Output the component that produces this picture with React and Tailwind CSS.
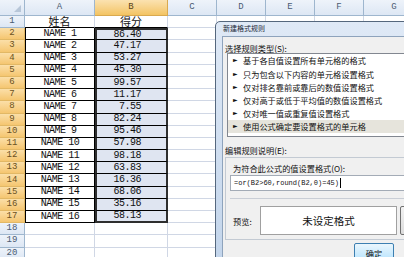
import React from 'react';

const data = [
    ['NAME 1', '86.40'],
    ['NAME 2', '47.17'],
    ['NAME 3', '53.27'],
    ['NAME 4', '45.30'],
    ['NAME 5', '99.57'],
    ['NAME 6', '11.17'],
    ['NAME 7', '7.55'],
    ['NAME 8', '82.24'],
    ['NAME 9', '95.46'],
    ['NAME 10', '57.98'],
    ['NAME 11', '98.18'],
    ['NAME 12', '63.83'],
    ['NAME 13', '16.36'],
    ['NAME 14', '68.06'],
    ['NAME 15', '35.16'],
    ['NAME 16', '58.13'],
];

const ruleTypes = [
    '基于各自值设置所有单元格的格式',
    '只为包含以下内容的单元格设置格式',
    '仅对排名靠前或靠后的数值设置格式',
    '仅对高于或低于平均值的数值设置格式',
    '仅对唯一值或重复值设置格式',
    '使用公式确定要设置格式的单元格',
];

const extraCols = ['C', 'D', 'E', 'F', 'G'];
const rowNums = Array.from({ length: 20 }, (_, i) => i + 1);

const mono = "font-['Liberation_Mono','Noto_Sans_CJK_SC',monospace]";
const cjk = "font-['Noto_Sans_CJK_SC',sans-serif]";

const SheetRow = ({ r }) => {
    const inData = r >= 2 && r <= 17;
    const item = inData ? data[r - 2] : null;

    return (
        <>
            <div
                className={
                    inData
                        ? `flex items-center justify-center border-r border-b border-[#e2b865] bg-linear-to-b from-[#fbdfa8] to-[#f5c670] text-[9px] leading-none text-[#6b5222] ${mono}`
                        : `flex items-center justify-center border-r border-b border-[#9eb6ce] bg-linear-to-b from-[#eef3fa] to-[#dde7f4] text-[9px] leading-none text-[#4a5b72] ${mono}`
                }
            >
                {r}
            </div>

            {r === 1 ? (
                <div className={`flex items-center justify-center border-r border-b border-r-[#d0d7e5] border-b-black text-[11px] leading-none text-[#111] ${cjk}`}>
                    姓名
                </div>
            ) : inData ? (
                <div className={`flex items-center justify-center border-l border-r border-b border-black text-[10px] tracking-[-0.5px] leading-none text-[#111] ${mono}`}>
                    {item[0]}
                </div>
            ) : (
                <div className="border-r border-b border-[#d0d7e5]" />
            )}

            {r === 1 ? (
                <div className={`flex items-center justify-center border-r border-b border-r-[#d0d7e5] border-b-black text-[11px] leading-none text-[#111] ${cjk}`}>
                    得分
                </div>
            ) : inData ? (
                <div
                    className={`flex items-center justify-end border-l-2 border-r-2 border-[#2e2e2e] bg-[#dfe5f1] pr-[25px] text-[10px] tracking-[-0.5px] leading-none text-[#111] ${mono} ${r === 2 ? 'border-t-2' : ''} ${r === 17 ? 'border-b-2' : 'border-b border-b-black'}`}
                >
                    {item[1]}
                </div>
            ) : (
                <div className="border-r border-b border-[#d0d7e5]" />
            )}

            {extraCols.map(c => (
                <div key={c} className="border-r border-b border-[#d0d7e5]" />
            ))}
        </>
    );
};

const RuleDialog = () => (
    <div className="absolute left-[215px] top-[21px] flex h-[240px] w-[240px] flex-col rounded-tl-[5px] border border-[#55677d] bg-linear-to-b from-[#dfe9f6] to-[#c3d5eb] pl-[6px]">
        <div className={`flex h-[18px] items-center pl-[1px] text-[7px] leading-none text-[#1c2838] ${cjk}`}>
            新建格式规则
        </div>

        <div className={`flex flex-1 flex-col border border-[#8ea3bc] bg-[#f0f0f0] pl-[2px] text-[8.2px] leading-[10px] text-[#111] ${cjk}`}>
            <div className="mt-[6px] h-[10px]">选择规则类型(S):</div>

            <div className="ml-[2px] border border-[#828790] bg-white pb-[3px]">
                {ruleTypes.map((t, i) => (
                    <div
                        key={t}
                        className={`flex h-[13.2px] items-center pl-[5px] ${i === ruleTypes.length - 1 ? 'bg-[#e6e4dc]' : ''}`}
                    >
                        <span className="w-[10px] font-['DejaVu_Sans',sans-serif] text-[6px]">►</span>
                        <span>{t}</span>
                    </div>
                ))}
            </div>

            <div className="mt-[8px] h-[10px]">编辑规则说明(E):</div>

            <div className="mt-[2px] flex h-[83px] flex-col border border-[#c3cad3] pl-[4px]">
                <div className="mt-[5px] h-[10px] pl-[3px]">为符合此公式的值设置格式(O):</div>
                <div className="mt-[2px] flex h-[16px] items-center border border-[#a3abb6] bg-white pl-[3px]">
                    <span className={`text-[7px] leading-none text-[#111] ${mono}`}>=or(B2&gt;60,round(B2,0)=45)</span>
                    <span className="ml-[1px] h-[10px] w-px bg-black" />
                </div>
                <div className="mt-[7px] h-px bg-[#c9ced6]" />
                <div className="mt-[7px] flex h-[29px] items-center">
                    <span className="w-[30px] shrink-0 pl-[3px]">预览:</span>
                    <div className={`flex h-[29px] w-[137px] shrink-0 items-center justify-center border border-[#a0a0a0] bg-white text-[10.5px] ${cjk}`}>
                        未设定格式
                    </div>
                    <div className="ml-[3px] h-[29px] w-[40px] shrink-0 rounded-[2px] border border-[#707070] bg-linear-to-b from-[#f2f2f2] to-[#dcdcdc]" />
                </div>
            </div>

            <div className="ml-[129px] mt-[3px] flex h-[16px] w-[40px] items-center justify-center rounded-[2px] border border-[#3c7fb1] bg-linear-to-b from-[#eaf6fd] to-[#bee6fd] pt-[3px] text-[8.2px]">
                确定
            </div>
        </div>
    </div>
);

const App = () => {
    return (
        <div className="relative h-[257px] w-[404px] overflow-hidden bg-white">
            <div className="grid grid-cols-[25px_70px_73px_49px_49px_49px_49px_61px] grid-rows-[16px_repeat(20,12.2px)]">
                <div className="relative border-r border-b border-[#9eb6ce] bg-linear-to-b from-[#eef3fa] to-[#dde7f4]">
                    <svg className="absolute right-[3px] bottom-[3px]" width="7" height="7" viewBox="0 0 7 7">
                        <polygon points="7,0 7,7 0,7" fill="#b7c6d8" />
                    </svg>
                </div>
                <div className={`flex items-center justify-center border-r border-b border-[#9eb6ce] bg-linear-to-b from-[#eef3fa] to-[#dde7f4] text-[9px] text-[#4a5b72] ${mono}`}>
                    A
                </div>
                <div className={`flex items-center justify-center border-r border-b border-[#d9a94f] bg-linear-to-b from-[#fbe2b0] to-[#f3c462] text-[9px] text-[#5a4519] ${mono}`}>
                    B
                </div>
                {extraCols.map(c => (
                    <div
                        key={c}
                        className={`flex items-center justify-center border-r border-b border-[#9eb6ce] bg-linear-to-b from-[#eef3fa] to-[#dde7f4] text-[9px] text-[#4a5b72] ${mono}`}
                    >
                        {c}
                    </div>
                ))}

                {rowNums.map(r => (
                    <SheetRow key={r} r={r} />
                ))}
            </div>

            <RuleDialog />
        </div>
    );
};

export default App;
